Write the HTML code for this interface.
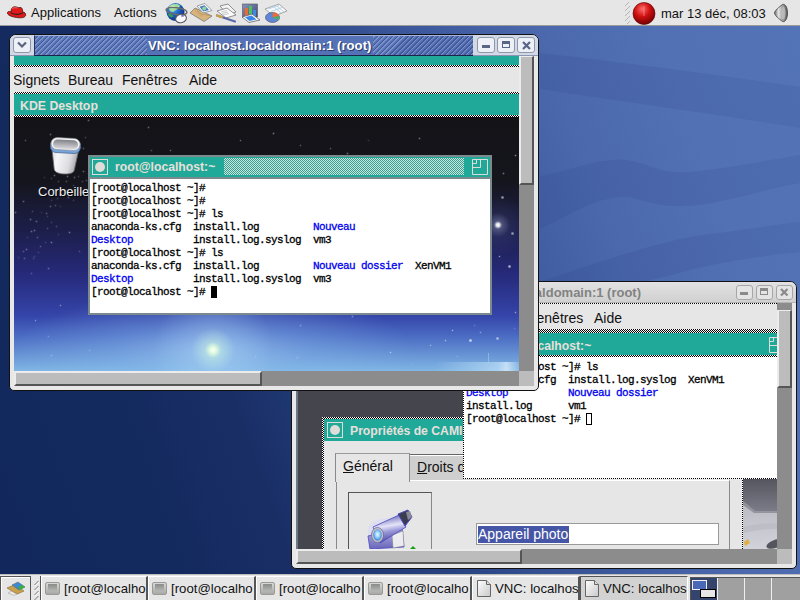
<!DOCTYPE html>
<html><head><meta charset="utf-8">
<style>
*{margin:0;padding:0;box-sizing:border-box}
html,body{width:800px;height:600px;overflow:hidden}
body{position:relative;font-family:"Liberation Sans",sans-serif;background:linear-gradient(70deg,#12285c 0%,#132a5e 18%,#1a2e66 30%,#1e3670 35%,#2e4a8a 50%,#3e5a9e 62%,#4b68ac 73%,#5270b4 85%,#5474b8 100%)}
.a{position:absolute}
.t{position:absolute;white-space:pre;line-height:1}
.chk{background-image:conic-gradient(#000 25%,#fff 0 50%,#000 0 75%,#fff 0);background-size:2px 2px}
.mono{font-family:"Liberation Mono",monospace;font-size:10px;line-height:13px;white-space:pre;position:absolute}
.bl{color:#0000f0}
</style></head><body>



<svg class="a" style="left:0;top:0" width="800" height="600" viewBox="0 0 800 600">
 <path d="M540 53 C600 60 700 72 800 87 L800 128 C700 112 600 98 540 89 Z" fill="rgba(20,40,100,0.085)"/>
 <path d="M540 176 C580 168 600 158 625 160 C650 163 660 175 690 172 C730 168 770 160 800 155 L800 183 C760 190 720 205 684 206 C650 207 640 196 620 197 C590 200 570 215 540 229 Z" fill="rgba(20,40,100,0.085)"/>
 <path d="M540 282 C600 262 660 240 710 234 C750 229 780 224 800 222 L800 252 C760 256 720 262 690 270 C650 282 600 290 560 300 Z" fill="rgba(20,40,100,0.085)"/>
</svg>
<!-- ============ TOP PANEL ============ -->
<div id="top" class="a" style="left:0;top:0;width:800px;height:26px;background:#e6e6e6;border-bottom:1px solid #9a9a9a">
 <!-- red hat -->
 <svg class="a" style="left:6px;top:5px" width="21" height="14" viewBox="0 0 21 14">
  <path d="M1.5 8.5 C1 6.5 3 6 5 7 C5 4 6 1.5 9.5 1.8 C11.5 2 12 3 14 2.5 C16 2.2 16.5 4 16.8 7 C18.5 7.2 20 8.2 19.6 10.5 C19 12.8 15 13.2 10.5 12.5 C6 11.8 2.2 10.5 1.5 8.5Z" fill="#e01a1a" stroke="#3a0808" stroke-width="0.7"/>
  <path d="M5 7.2 C8 9 13 9.5 16.8 7.3 L16.9 8.6 C13 10.6 8 10.2 5 8.5Z" fill="#222"/>
  <path d="M6 3.5 C8 2.5 10 2.6 11.5 3" stroke="#ff7a7a" stroke-width="0.8" fill="none"/>
 </svg>
 <div class="t" style="left:31px;top:6px;font-size:13px;color:#111">Applications</div>
 <div class="t" style="left:114px;top:6px;font-size:13px;color:#111">Actions</div>
 <!-- globe -->
 <svg class="a" style="left:163px;top:1px" width="26" height="24" viewBox="0 0 26 24">
  <defs><radialGradient id="gl" cx="0.35" cy="0.3" r="0.75"><stop offset="0" stop-color="#5aa8f0"/><stop offset="0.55" stop-color="#1a5cc0"/><stop offset="1" stop-color="#0a2a70"/></radialGradient></defs>
  <circle cx="12.5" cy="11" r="9" fill="url(#gl)"/>
  <path d="M6 5.5 C9 2.5 14 2.5 17 4.5 C16 8 13 8.5 11 10.5 C8.5 11.5 5.5 10 6 5.5Z" fill="#a4dca0"/>
  <path d="M8 5 C10 4 12 4.5 12 6 C10 7.5 8.5 7 8 5Z" fill="#d8f4d0"/>
  <path d="M5 13 C7 12.5 9 13.5 10.5 15.5 C8 17 6 16 5 13Z" fill="#38a048"/>
  <ellipse cx="13.5" cy="10" rx="10.5" ry="3.4" transform="rotate(8 13 10)" fill="none" stroke="#6a6a6a" stroke-width="1.4"/>
  <ellipse cx="18" cy="17.5" rx="5.5" ry="4.2" transform="rotate(-15 18 17.5)" fill="#f8f8fa" stroke="#5a5a64" stroke-width="1.1"/>
  <ellipse cx="19.5" cy="14.8" rx="1.6" ry="0.9" fill="#6a6ac0"/>
 </svg>
 <!-- envelope -->
 <svg class="a" style="left:189px;top:2px" width="24" height="20" viewBox="0 0 24 20">
  <path d="M1 11 L6 6 L23 14 L15 19.5 Z" fill="#d8b47c" stroke="#7a7a7a" stroke-width="0.8"/>
  <path d="M6 6 L12 12 L23 14" fill="none" stroke="#b09060" stroke-width="0.7"/>
  <path d="M4 7 L15 12.5 L12 15 Z" fill="#c8a46c" opacity="0.6"/>
  <path d="M8 4 L16 1.5 L23 8.5 L14 11 Z" fill="#fafafa" stroke="#8a8a8a" stroke-width="0.8"/>
  <path d="M10.5 4.8 L15.5 3.3 L20 8 L14.3 9.6 Z" fill="#3f78c8"/>
  <circle cx="15.2" cy="6.4" r="2" fill="#98d49a"/>
 </svg>
 <!-- document + pen -->
 <svg class="a" style="left:215px;top:3px" width="24" height="20" viewBox="0 0 24 20">
  <path d="M5 3 L13 1 L21 9 L13 12 Z" fill="#f4f4f4" stroke="#777" stroke-width="0.8"/>
  <path d="M2 8 L12 5 L21 12 L11 15 Z" fill="#fbfbfb" stroke="#777" stroke-width="0.8"/>
  <path d="M6 9 L12 7.5 M7 10.5 L13 9 M8 12 L14 10.5" stroke="#aaa" stroke-width="0.6"/>
  <path d="M2 12.5 L20 18.5" stroke="#5a6aa8" stroke-width="2.2" stroke-linecap="round"/>
  <path d="M2 12.5 L7 14.2" stroke="#c8a040" stroke-width="2.2" stroke-linecap="round"/>
 </svg>
 <!-- presentation -->
 <svg class="a" style="left:241px;top:3px" width="20" height="20" viewBox="0 0 20 20">
  <defs><linearGradient id="pb" x1="0" y1="0" x2="1" y2="1"><stop offset="0" stop-color="#8a94c0"/><stop offset="1" stop-color="#3a4878"/></linearGradient></defs><rect x="1.5" y="1" width="15" height="13" fill="url(#pb)" stroke="#555" stroke-width="0.6"/>
  <rect x="4" y="5" width="3" height="8" fill="#f06a2a"/>
  <rect x="8" y="3" width="3" height="10" fill="#4cc060"/>
  <rect x="12" y="7" width="3" height="6" fill="#3a8ee8"/>
  <path d="M1 14 L11 11 L19 17 L8 19.5 Z" fill="#f6f6f6" stroke="#666" stroke-width="0.8"/>
  <path d="M4 14.3 L10.5 12.5 L15.5 16.5 L8.5 18 Z" fill="#3a86e8"/>
 </svg>
 <!-- spreadsheet pie -->
 <svg class="a" style="left:264px;top:3px" width="24" height="20" viewBox="0 0 24 20">
  <path d="M1 6 L15 1 L23 8 L10 13 Z" fill="#f8f8f8" stroke="#888" stroke-width="0.7"/>
  <path d="M4 6 L15 2.5 M7 8.5 L18 4.5 M10 4 L17 10 M13 3 L20 9" stroke="#9cc8e8" stroke-width="0.7"/>
  <ellipse cx="8.5" cy="14.5" rx="7" ry="5" fill="#5f86d8" stroke="#445" stroke-width="0.6"/>
  <path d="M8.5 14.5 L9 9.5 C12 9.5 14.5 11 15 13 Z" fill="#f06a3a"/>
  <path d="M8.5 14.5 L15 13 C15.5 15 15 16 14 17 Z" fill="#4cb060"/>
 </svg>
 <!-- handle -->
 <div class="a" style="left:625px;top:2px;width:5px;height:22px;background:repeating-linear-gradient(135deg,transparent 0 2.5px,#b4b4b4 2.5px 3.5px)"></div>
 <!-- red ball -->
 <svg class="a" style="left:632px;top:2px" width="24" height="23" viewBox="0 0 24 23">
  <defs><radialGradient id="rb" cx="0.42" cy="0.3" r="0.75"><stop offset="0" stop-color="#ff6a6a"/><stop offset="0.45" stop-color="#d01010"/><stop offset="1" stop-color="#6a0000"/></radialGradient></defs>
  <circle cx="12" cy="11.5" r="11" fill="url(#rb)" stroke="#500" stroke-width="0.6"/>
  <path d="M12 4 L12 14" stroke="#ff9a9a" stroke-width="1" opacity="0.6"/>
 </svg>
 <div class="t" style="left:661px;top:7px;font-size:13px;color:#111">mar 13 déc, 08:03</div>
 <!-- speaker -->
 <svg class="a" style="left:773px;top:3px" width="16" height="20" viewBox="0 0 16 20">
  <defs><linearGradient id="sp" x1="0" y1="0" x2="1" y2="0"><stop offset="0" stop-color="#6a6a6a"/><stop offset="0.3" stop-color="#e4e4e4"/><stop offset="0.65" stop-color="#9a9a9a"/><stop offset="1" stop-color="#5a5a5a"/></linearGradient></defs>
  <path d="M1.5 10 C1.5 8 6 4 9.5 1.5 C12.5 0.5 14.5 5 14.5 10 C14.5 15 12.5 19.5 9.5 18.5 C6 16 1.5 12 1.5 10Z" fill="url(#sp)" stroke="#4a4a4a" stroke-width="0.9"/>
  <ellipse cx="10.5" cy="10" rx="2" ry="6.5" fill="#c8c8c8" opacity="0.7"/>
 </svg>
</div>

<!-- ============ WINDOW 2 (VNC back) ============ -->
<div id="w2" class="a" style="left:291px;top:281px;width:506px;height:288px;background:#e8e8e8;border:1px solid #111;border-radius:7px 7px 5px 5px;overflow:hidden">
 <div class="a" style="left:0;top:0;width:504px;height:21px;background:linear-gradient(#e2e2e2,#d0d0d0);border-bottom:1px solid #b4b4b4"></div>
 <div class="t" style="left:128px;top:4px;font-weight:bold;font-size:13px;color:#828282">VNC: localhost.localdomain:1 (root)</div>
 <div class="a" style="left:444px;top:3px;width:17px;height:15px;background:#e4e4e4;border:1px solid #a6a6a6;border-radius:3px"></div>
 <div class="a" style="left:448px;top:10px;width:8px;height:3px;background:#8a8a8a"></div>
 <div class="a" style="left:464px;top:3px;width:17px;height:15px;background:#e4e4e4;border:1px solid #a6a6a6;border-radius:3px"></div>
 <div class="a" style="left:468px;top:6px;width:8px;height:7px;border:1px solid #8a8a8a;border-top-width:3px"></div>
 <div class="a" style="left:484px;top:3px;width:17px;height:15px;background:#e4e4e4;border:1px solid #a6a6a6;border-radius:3px"></div>
 <svg class="a" style="left:488px;top:6px" width="9" height="9"><path d="M1 1 L7.5 7.5 M7.5 1 L1 7.5" stroke="#8a8a8a" stroke-width="2.2"/></svg>
 <!-- viewport -->
 <div class="a" style="left:4px;top:21px;width:481px;height:246px;overflow:hidden;background:#45454d">
  <div class="a" style="left:0;top:0;width:481px;height:1px;background-image:linear-gradient(90deg,#000 50%,#fff 50%);background-size:2px 1px"></div>
  <div class="a" style="left:0;top:1px;width:481px;height:25px;background:#e6e6e6"></div>
  <div class="t" style="left:232px;top:8px;font-size:14px;color:#111">Fenêtres</div>
  <div class="t" style="left:298px;top:8px;font-size:14px;color:#111">Aide</div>
  <div class="a chk" style="left:0;top:26px;width:481px;height:4px"></div>
  <div class="a" style="left:0;top:30px;width:481px;height:22px;background:#20a898"></div>
  <div class="t" style="left:195px;top:37px;font-weight:bold;font-size:12.2px;color:#e8e0dc">root@localhost:~</div>
  <svg class="a" style="left:473px;top:34px" width="16" height="16" viewBox="0 0 16 16"><path d="M0.5 0.5 H15.5 V15.5 H0.5 Z M0.5 8.5 H8.5 V0.5 M0.5 4.5 H4.5 V0.5" fill="none" stroke="#e0dcd8" stroke-width="1"/></svg>
  <div class="a chk" style="left:0;top:52px;width:481px;height:2px"></div>
  <!-- left strip -->
  <div class="a" style="left:0;top:54px;width:2px;height:192px;background:#6a7888"></div>
  <!-- dialog -->
  <div class="a chk" style="left:26px;top:114px;width:421px;height:140px"></div>
  <div class="a" style="left:28px;top:116px;width:418px;height:140px;background:#e6e6e6"></div>
  <div class="a" style="left:28px;top:116px;width:418px;height:22px;background:#20a898"></div>
  <div class="a" style="left:31px;top:119px;width:16px;height:16px;border:1px solid #e0dcd8"></div>
  <div class="a" style="left:34px;top:122px;width:10px;height:10px;border-radius:50%;background:#e0dcd8"></div>
  <div class="t" style="left:54px;top:122px;font-weight:bold;font-size:12.2px;color:#e8e0dc">Propriétés de CAMI</div>
  <!-- tabs -->
  <div class="a" style="left:113px;top:151px;width:80px;height:27px;background:#cfcfcf;border-top:1px solid #666;border-bottom:1px solid #666;box-shadow:inset 0 1px 0 #fff"></div>
  <div class="t" style="left:121px;top:157px;font-size:14px;color:#111"><u>D</u>roits d’accès</div>
  <div class="a" style="left:40px;top:177px;width:394px;height:80px;border:1px solid #8a8a8a;border-top-color:#fff;background:#e6e6e6"></div>
  <div class="a" style="left:39px;top:150px;width:75px;height:29px;background:#e6e6e6;border:1px solid #8a8a8a;border-bottom:none;border-top-color:#9a9a9a"></div>
  <div class="t" style="left:47px;top:156px;font-size:14px;color:#111"><u>G</u>énéral</div>
  <div class="a" style="left:52px;top:189px;width:84px;height:70px;border:1px solid #555;border-right-color:#888"></div>
  <!-- camera -->
  <svg class="a" style="left:66px;top:203px" width="55" height="44" viewBox="0 0 55 44">
   <defs>
    <linearGradient id="cmt" x1="0.3" y1="0" x2="0.5" y2="1"><stop offset="0" stop-color="#5a58b0"/><stop offset="0.4" stop-color="#e4e4f8"/><stop offset="0.6" stop-color="#9a98d8"/><stop offset="1" stop-color="#44429a"/></linearGradient>
    <linearGradient id="cmb" x1="0" y1="0" x2="0" y2="1"><stop offset="0" stop-color="#b8b8e8"/><stop offset="1" stop-color="#6866b8"/></linearGradient>
    <radialGradient id="ln" cx="0.5" cy="0.45" r="0.6"><stop offset="0" stop-color="#f0faff"/><stop offset="0.5" stop-color="#8ac8f8"/><stop offset="1" stop-color="#1a68d8"/></radialGradient>
   </defs>
   <path d="M6 26 C5 18 12 14 24 12 L30 11 L8 42 L6 42 Z" fill="#dcdcf4" opacity="0.8"/>
   <path d="M6 30 L40 22 L42 41 L8 43 Z" fill="url(#cmb)" stroke="#4a48c0" stroke-width="0.8"/>
   <path d="M30 29 L41 25 L42 40 L31 42 Z" fill="#ececf0" stroke="#777" stroke-width="0.5"/>
   <path d="M11 21 L37 9 L44 21 L18 37 Z" fill="url(#cmt)" stroke="#4a48c0" stroke-width="0.8"/>
   <path d="M36 8 L46 4 L50 11 L43 20 Z" fill="#3c3c50" stroke="#4a48c0" stroke-width="1"/>
   <path d="M44 6 L48 5 L50 11 L46 14 Z" fill="#888898"/>
   <ellipse cx="15.5" cy="29" rx="6" ry="7.5" fill="#c8c4c0" stroke="#6a68a8" stroke-width="0.8"/>
   <ellipse cx="15.5" cy="29" rx="4.2" ry="5.8" fill="url(#ln)"/>
   <path d="M48 43 L51 40 L54 43 Z" fill="#14a014"/>
  </svg>
  <!-- text field -->
  <div class="a" style="left:180px;top:220px;width:243px;height:22px;background:#fff;border:1px solid #9a9a9a"></div>
  <div class="a" style="left:182px;top:223px;width:91px;height:17px;background:#4656a6"></div>
  <div class="t" style="left:182px;top:224px;font-size:14px;color:#fff">Appareil photo</div>
  <!-- wallpaper -->
  <svg class="a" style="left:447px;top:176px" width="34" height="70" viewBox="0 0 34 70">
   <defs>
    <linearGradient id="wp1" x1="0" y1="0" x2="0" y2="1"><stop offset="0" stop-color="#55555f"/><stop offset="1" stop-color="#7c7c88"/></linearGradient>
    <linearGradient id="wp2" x1="0" y1="0" x2="0" y2="1"><stop offset="0" stop-color="#a8a8b2"/><stop offset="0.6" stop-color="#c4c4cc"/><stop offset="1" stop-color="#d2d2da"/></linearGradient>
   </defs>
   <rect x="0" y="0" width="34" height="70" fill="url(#wp2)"/>
   <path d="M0 0 H34 V32 H12 L0 22 Z" fill="url(#wp1)"/>
   <path d="M0 22 L12 32 H34 V34 H11 L0 26Z" fill="#6a6a74" opacity="0.5"/>
   <path d="M0 48 C8 46 20 44 34 44 V50 C20 50 10 52 0 54Z" fill="#b8b8c0" opacity="0.6"/>
   <path d="M1 63 L5 60 L7 64 L2 67Z" fill="#e0b040"/>
   <ellipse cx="32" cy="65" rx="9" ry="4" transform="rotate(-20 32 65)" fill="#55555e"/>
  </svg>
  <!-- terminal -->
  <div class="a chk" style="left:167px;top:54px;width:320px;height:122px"></div>
  <div class="a" style="left:168px;top:54px;width:320px;height:121px;background:#fff">
   <div class="mono" style="left:2px;top:4px;color:#000;font-size:11px;letter-spacing:-0.6px;-webkit-text-stroke:0.3px">[root@localhost ~]# ls
anaconda-ks.cfg  install.log.syslog  XenVM1
<span class="bl">Desktop</span>          <span class="bl">Nouveau dossier</span>
install.log      vm1
[root@localhost ~]# <span style="outline:1px solid #000;outline-offset:-1px">&nbsp;</span></div>
  </div>
 </div>
 <!-- vertical scrollbar -->
 <div class="a" style="left:485px;top:21px;width:15px;height:246px;background:#8c8c8c"></div>
 <div class="a" style="left:485px;top:28px;width:15px;height:78px;background:#bcbcbc;border-left:2px solid #ececec;border-top:1px solid #ececec;border-right:2px solid #555;border-bottom:2px solid #555"></div>
 <!-- horizontal scrollbar -->
 <div class="a" style="left:4px;top:267px;width:481px;height:15px;background:#8c8c8c"></div>
 <div class="a" style="left:4px;top:267px;width:226px;height:15px;background:#bcbcbc;border-top:2px solid #ececec;border-left:2px solid #ececec;border-right:2px solid #555;border-bottom:2px solid #555"></div>
 <div class="a" style="left:485px;top:267px;width:15px;height:15px;background:#bcbcbc"></div>
</div>

<!-- ============ WINDOW 1 (VNC front) ============ -->
<div id="w1" class="a" style="left:9px;top:34px;width:530px;height:357px;background:#e8e8e8;border:1px solid #111;border-radius:7px 7px 5px 5px;overflow:hidden">
 <!-- title bar -->
 <div class="a" style="left:0;top:0;width:528px;height:21px;background:#d3d8e5;border-bottom:1px solid #8a96b4"></div>
 <div class="a" style="left:3px;top:2px;width:18px;height:16px;background:#eef0f7;border:1px solid #8e96ac;border-radius:3px"></div>
 <svg class="a" style="left:7px;top:6px" width="10" height="8"><path d="M1 1.5 L5 5.5 L9 1.5" stroke="#59627e" stroke-width="2.2" fill="none"/></svg>
 <div class="a" style="left:24px;top:0;width:439px;height:21px;background:repeating-linear-gradient(135deg,#5872b6 0 1.6px,#42589a 1.6px 2.5px,#7a92ca 2.5px 3.54px);border-top:1px solid #a4b4e0;border-bottom:1px solid #1a2448;border-left:1px solid #24325e"></div>
 <div class="a" style="left:137px;top:1px;width:226px;height:19px;background:#5672b6"></div>
 <div class="t" style="left:138px;top:4px;font-weight:bold;font-size:13.15px;color:#fff;text-shadow:1px 1px 0 #2a3a6a">VNC: localhost.localdomain:1 (root)</div>
 <div class="a" style="left:467px;top:2px;width:18px;height:16px;background:#eef0f7;border:1px solid #8e96ac;border-radius:3px"></div>
 <div class="a" style="left:472px;top:10px;width:8px;height:3px;background:#5a6484"></div>
 <div class="a" style="left:487px;top:2px;width:18px;height:16px;background:#eef0f7;border:1px solid #8e96ac;border-radius:3px"></div>
 <div class="a" style="left:492px;top:6px;width:8px;height:7px;border:1px solid #5a6484;border-top-width:3px"></div>
 <div class="a" style="left:507px;top:2px;width:18px;height:16px;background:#eef0f7;border:1px solid #8e96ac;border-radius:3px"></div>
 <svg class="a" style="left:512px;top:6px" width="9" height="9"><path d="M1 1 L8 8 M8 1 L1 8" stroke="#5a6484" stroke-width="2.2"/></svg>
 <!-- vnc viewport -->
 <div class="a" style="left:4px;top:21px;width:505px;height:315px;overflow:hidden;background:#111">
  <div class="a" style="left:0;top:0;width:505px;height:9px;background:#20a898"></div>
  <div class="a chk" style="left:0;top:9px;width:505px;height:2px"></div>
  <div class="a" style="left:0;top:11px;width:505px;height:25px;background:#e6e6e6"></div>
  <div class="t" style="left:-1px;top:17px;font-size:14px;color:#111">Signets</div>
  <div class="t" style="left:54px;top:17px;font-size:14px;color:#111">Bureau</div>
  <div class="t" style="left:108px;top:17px;font-size:14px;color:#111">Fenêtres</div>
  <div class="t" style="left:175px;top:17px;font-size:14px;color:#111">Aide</div>
  <div class="a chk" style="left:0;top:36px;width:505px;height:2px"></div>
  <div class="a" style="left:0;top:38px;width:505px;height:21px;background:#20a898"></div>
  <div class="t" style="left:6px;top:44px;font-weight:bold;font-size:12.3px;color:#e8e0dc">KDE Desktop</div>
  <div class="a chk" style="left:0;top:59px;width:505px;height:2px"></div>
  <div id="kde" class="a" style="left:0;top:61px;width:505px;height:254px;overflow:hidden;background:linear-gradient(180deg,#131317 0%,#15151d 25%,#1c1e48 44%,#262a7a 62%,#3444a8 78%,#4a6ac2 86%,#80b6e4 100%)">
   <div class="a" style="left:0;top:0;width:1px;height:1px;background:transparent;box-shadow:501px 38px 0 0.2px rgba(255,255,255,0.5),488px 80px 0 0.6px rgba(255,255,255,0.6),498px 116px 0 0.6px rgba(255,255,255,0.6),485px 139px 0 0.2px rgba(255,255,255,0.5),495px 149px 0 0.6px rgba(255,255,255,0.7),501px 195px 0 0.2px rgba(255,255,255,0.5),456px 223px 0 0.6px rgba(255,255,255,0.8),438px 213px 0 0.2px rgba(255,255,255,0.5),483px 221px 0 0.6px rgba(255,255,255,0.6),46px 188px 0 0.2px rgba(255,255,255,0.4),21px 203px 0 0.2px rgba(255,255,255,0.4),286px 208px 0 0.2px rgba(255,255,255,0.4),376px 235px 0 0.2px rgba(255,255,255,0.5),416px 228px 0 0.2px rgba(255,255,255,0.4),226px 23px 0 0.2px rgba(255,255,255,0.35),156px 33px 0 0.2px rgba(255,255,255,0.35),286px 28px 0 0.2px rgba(255,255,255,0.3),316px 31px 0 0.2px rgba(255,255,255,0.3),76px 43px 0 0.2px rgba(255,255,255,0.3),11px 23px 0 0.2px rgba(255,255,255,0.3),431px 223px 0 0.2px rgba(255,255,255,0.5),466px 215px 0 0.2px rgba(255,255,255,0.4)"></div>
   <div class="a" style="left:421px;top:245px;width:84px;height:9px;background:linear-gradient(90deg,rgba(170,210,240,0) 0%,rgba(170,210,240,0.5) 40%,rgba(200,230,250,0.6) 75%,rgba(230,245,255,0.7) 85%,rgba(170,210,240,0.3) 100%)"></div>
   <div class="a" style="left:474px;top:236px;width:1px;height:10px;background:rgba(170,200,230,0.6)"></div>
   <div class="a" style="left:0;top:0;width:1px;height:1px;box-shadow:44px 117px 0 0.3px rgba(220,225,255,0.14),46px 77px 0 0.3px rgba(220,225,255,0.26),4px 140px 0 0.3px rgba(220,225,255,0.15),43px 81px 0 0.3px rgba(220,225,255,0.18),74px 56px 0 0.3px rgba(220,225,255,0.23),33px 111px 0 0.3px rgba(220,225,255,0.21),45px 73px 0 0.3px rgba(220,225,255,0.14),17px 156px 0 0.3px rgba(220,225,255,0.24),18px 94px 0 0.3px rgba(220,225,255,0.20),66px 30px 0 0.3px rgba(220,225,255,0.28),64px 59px 0 0.3px rgba(220,225,255,0.20),60px 60px 0 0.3px rgba(220,225,255,0.31),40px 58px 0 0.3px rgba(220,225,255,0.36),61px 24px 0 0.3px rgba(220,225,255,0.14),36px 17px 0 0.3px rgba(220,225,255,0.35),13px 120px 0 0.3px rgba(220,225,255,0.13),46px 89px 0 0.3px rgba(220,225,255,0.14),41px 88px 0 0.3px rgba(220,225,255,0.25),69px 54px 0 0.3px rgba(220,225,255,0.36),17px 114px 0 0.3px rgba(220,225,255,0.37),26px 129px 0 0.3px rgba(220,225,255,0.28),42px 109px 0 0.3px rgba(220,225,255,0.22),72px 63px 0 0.3px rgba(220,225,255,0.26),53px 59px 0 0.3px rgba(220,225,255,0.37),32px 96px 0 0.3px rgba(220,225,255,0.30),20px 139px 0 0.3px rgba(220,225,255,0.17),33px 99px 0 0.3px rgba(220,225,255,0.16),12px 132px 0 0.3px rgba(220,225,255,0.36),61px 72px 0 0.3px rgba(220,225,255,0.22),55px 115px 0 0.3px rgba(220,225,255,0.40),37px 83px 0 0.3px rgba(220,225,255,0.15),31px 125px 0 0.3px rgba(220,225,255,0.17),24px 135px 0 0.3px rgba(220,225,255,0.16),66px 75px 0 0.3px rgba(220,225,255,0.39),71px 20px 0 0.3px rgba(220,225,255,0.22),22px 104px 0 0.3px rgba(220,225,255,0.34),37px 125px 0 0.3px rgba(220,225,255,0.40),68px 64px 0 0.3px rgba(220,225,255,0.22),19px 141px 0 0.3px rgba(220,225,255,0.19),37px 105px 0 0.3px rgba(220,225,255,0.18),1px 95px 0 0.3px rgba(220,225,255,0.36),30px 60px 0 0.3px rgba(220,225,255,0.14),57px 47px 0 0.3px rgba(220,225,255,0.34),44px 64px 0 0.3px rgba(220,225,255,0.23),59px 83px 0 0.3px rgba(220,225,255,0.17),34px 151px 0 0.3px rgba(220,225,255,0.35),36px 89px 0 0.3px rgba(220,225,255,0.30),27px 95px 0 0.3px rgba(220,225,255,0.12),74px 3px 0 0.3px rgba(220,225,255,0.38),59px 68px 0 0.3px rgba(220,225,255,0.18),23px 120px 0 0.3px rgba(220,225,255,0.28),20px 113px 0 0.3px rgba(220,225,255,0.37),16px 102px 0 0.3px rgba(220,225,255,0.37),54px 80px 0 0.3px rgba(220,225,255,0.27),63px 77px 0 0.3px rgba(220,225,255,0.17),9px 134px 0 0.3px rgba(220,225,255,0.25),52px 44px 0 0.3px rgba(220,225,255,0.27),52px 64px 0 0.3px rgba(220,225,255,0.28),241px 239px 0 0.3px rgba(220,225,255,0.36),443px 239px 0 0.3px rgba(220,225,255,0.23),283px 240px 0 0.3px rgba(220,225,255,0.40),69px 31px 0 0.3px rgba(220,225,255,0.28),37px 61px 0 0.3px rgba(220,225,255,0.17),338px 199px 0 0.3px rgba(220,225,255,0.42),333px 36px 0 0.3px rgba(220,225,255,0.41),489px 56px 0 0.3px rgba(220,225,255,0.44),500px 211px 0 0.3px rgba(220,225,255,0.20),10px 141px 0 0.3px rgba(220,225,255,0.28),9px 84px 0 0.3px rgba(220,225,255,0.34),259px 16px 0 0.3px rgba(220,225,255,0.45),398px 247px 0 0.3px rgba(220,225,255,0.18),134px 10px 0 0.3px rgba(220,225,255,0.38),137px 33px 0 0.3px rgba(220,225,255,0.28),460px 208px 0 0.3px rgba(220,225,255,0.23),75px 233px 0 0.3px rgba(220,225,255,0.32),354px 23px 0 0.3px rgba(220,225,255,0.17),37px 238px 0 0.3px rgba(220,225,255,0.34),405px 21px 0 0.3px rgba(220,225,255,0.41),34px 219px 0 0.3px rgba(220,225,255,0.29),65px 134px 0 0.3px rgba(220,225,255,0.22),55px 41px 0 0.3px rgba(220,225,255,0.17)"></div>
   <!-- trash -->
   <svg class="a" style="left:34px;top:19px" width="34" height="39" viewBox="0 0 34 39">
    <defs><linearGradient id="tr" x1="0" y1="0" x2="1" y2="0.2"><stop offset="0" stop-color="#d0d0d4"/><stop offset="0.3" stop-color="#f6f6f8"/><stop offset="0.75" stop-color="#dcdce0"/><stop offset="1" stop-color="#a8a8b0"/></linearGradient>
    <linearGradient id="tri" x1="0" y1="0" x2="0" y2="1"><stop offset="0" stop-color="#808088"/><stop offset="1" stop-color="#d8d8dc"/></linearGradient></defs>
    <g transform="rotate(3 17 19)">
    <path d="M3 10 L7 34 C8 37 12 38 17 38 C22 38 26 37 27 34 L31 10 Z" fill="url(#tr)" stroke="#666" stroke-width="0.8"/>
    <rect x="2" y="3" width="30" height="14" rx="6" ry="6" fill="#78a4dc" stroke="#4a6a98" stroke-width="0.8"/>
    <rect x="2.5" y="2" width="29" height="12" rx="6" ry="6" fill="#f4f4f6" stroke="#888" stroke-width="0.6"/>
    <rect x="4.5" y="3.8" width="25" height="9" rx="4.5" ry="4.5" fill="url(#tri)"/>
    </g>
   </svg>
   <div class="t" style="left:24px;top:68px;font-size:13px;color:#f0f0f0;text-shadow:1px 1px 1px #000">Corbeille</div>
   <!-- glow -->
   <div class="a" style="left:-1px;top:173px;width:400px;height:120px;background:radial-gradient(ellipse 200px 60px at 200px 60px,rgba(170,215,250,0.55) 0,rgba(140,190,240,0.3) 50%,rgba(140,190,240,0) 100%)"></div>
   <div class="a" style="left:139px;top:173px;width:120px;height:120px;background:radial-gradient(circle at 60px 60px,rgba(255,255,255,1) 0,rgba(230,255,220,0.95) 3px,rgba(200,240,230,0.6) 8px,rgba(170,210,245,0.3) 22px,rgba(150,190,240,0) 60px)"></div>
   <div class="a" style="left:454px;top:78px;width:60px;height:60px;border-radius:50%;background:radial-gradient(circle,rgba(255,255,255,1) 0,rgba(255,255,255,0.9) 1.5px,rgba(200,210,255,0.3) 4px,rgba(150,170,255,0.08) 12px,rgba(150,170,255,0) 30px)"></div>
   <!-- terminal -->
   <div class="a" style="left:74px;top:38px;width:404px;height:160px;background:#7b8a8c">
    <div class="a" style="left:2px;top:2px;width:400px;height:20px;background:#20a898"></div>
    <div class="a" style="left:4px;top:4px;width:16px;height:16px;border:1px solid #e0dcd8"></div>
    <div class="a" style="left:7px;top:7px;width:10px;height:10px;border-radius:50%;background:#e0dcd8"></div>
    <div class="t" style="left:27px;top:6px;font-weight:bold;font-size:12.2px;color:#e8e0dc">root@localhost:~</div>
    <div class="a" style="left:136px;top:3px;width:240px;height:17px;background-image:conic-gradient(#e0dcd8 25%,#20a898 0 50%,#e0dcd8 0 75%,#20a898 0);background-size:2px 2px"></div>
    <svg class="a" style="left:384px;top:4px" width="16" height="16" viewBox="0 0 16 16"><path d="M0.5 0.5 H15.5 V15.5 H0.5 Z M0.5 8.5 H8.5 V0.5 M0.5 4.5 H4.5 V0.5" fill="none" stroke="#e0dcd8" stroke-width="1"/></svg>
    <div class="a" style="left:2px;top:24px;width:400px;height:134px;background:#fff">
     <div class="mono" style="left:1px;top:3px;color:#000;font-size:11px;letter-spacing:-0.6px;-webkit-text-stroke:0.3px">[root@localhost ~]#
[root@localhost ~]#
[root@localhost ~]# ls
anaconda-ks.cfg  install.log         <span class="bl">Nouveau</span>
<span class="bl">Desktop</span>          install.log.syslog  vm3
[root@localhost ~]# ls
anaconda-ks.cfg  install.log         <span class="bl">Nouveau dossier</span>  XenVM1
<span class="bl">Desktop</span>          install.log.syslog  vm3
[root@localhost ~]# <span style="background:#000">&nbsp;</span></div>
    </div>
   </div>
  </div>
 </div>
 <!-- vertical scrollbar -->
 <div class="a" style="left:509px;top:21px;width:15px;height:315px;background:#8c8c8c"></div>
 <div class="a" style="left:509px;top:21px;width:15px;height:129px;background:#bcbcbc;border-left:2px solid #ececec;border-top:1px solid #ececec;border-right:2px solid #555;border-bottom:2px solid #555"></div>
 <!-- horizontal scrollbar -->
 <div class="a" style="left:4px;top:336px;width:505px;height:15px;background:#8c8c8c"></div>
 <div class="a" style="left:4px;top:336px;width:248px;height:15px;background:#bcbcbc;border-top:2px solid #ececec;border-left:2px solid #ececec;border-right:2px solid #555;border-bottom:2px solid #555"></div>
 <div class="a" style="left:509px;top:336px;width:15px;height:15px;background:#bcbcbc"></div>
</div>

<!-- ============ BOTTOM PANEL ============ -->
<div id="bot" class="a" style="left:0;top:574px;width:800px;height:26px;background:#e6e6e6;border-top:1px solid #bdbdbd">
 <div class="a" style="left:0;top:1px;width:31px;height:25px;border:1px solid #555;border-top-color:#555;background:#e6e6e6;box-shadow:inset 1px 1px 0 #fff"></div>
 <svg class="a" style="left:6px;top:6px" width="20" height="15" viewBox="0 0 20 15">
  <path d="M2 12 L9 8 L15 11 L8 14.5 Z" fill="#e8e8e8" stroke="#aaa" stroke-width="0.6"/>
  <path d="M1 7 L8 4 L18 10 L11 13 Z" fill="#c8a050" stroke="#8a6a30" stroke-width="0.6"/>
  <path d="M6 4 L12 1 L19 6 L13 9 Z" fill="#3a8ad8" stroke="#666" stroke-width="0.6"/>
  <path d="M12 6 L16 4 L19 6 L14 9 Z" fill="#3ab040"/>
 </svg>
 <svg class="a" style="left:33px;top:3px" width="7" height="22"><path d="M1.5 7 L5.5 3 M1.5 12 L5.5 8 M1.5 17 L5.5 13 M1.5 22 L5.5 18" stroke="#777" stroke-width="1"/><path d="M2 8 L6 4 M2 13 L6 9 M2 18 L6 14" stroke="#fff" stroke-width="0.8"/></svg>
 <div class="a" style="left:40px;top:1px;width:1px;height:25px;background:#555"></div>
 <div class="a" style="left:41px;top:1px;width:107px;height:25px;background:#e6e6e6;border-top:1px solid #fff;border-left:1px solid #fff;border-right:2px solid #555;border-bottom:1px solid #555;overflow:hidden"><div class="a" style="left:3px;top:5px;width:15px;height:13px;border-radius:2px;background:linear-gradient(#d8d8d4,#a8a8a4);border:1px solid #9a9a96"></div><div class="a" style="left:6px;top:7px;width:9px;height:7px;background:linear-gradient(#8a8c8a,#b4b6b4)"></div><div class="t" style="left:22px;top:5px;font-size:13.2px;color:#111">[root@localho</div></div><div class="a" style="left:148px;top:1px;width:108px;height:25px;background:#e6e6e6;border-top:1px solid #fff;border-left:1px solid #fff;border-right:2px solid #555;border-bottom:1px solid #555;overflow:hidden"><div class="a" style="left:3px;top:5px;width:15px;height:13px;border-radius:2px;background:linear-gradient(#d8d8d4,#a8a8a4);border:1px solid #9a9a96"></div><div class="a" style="left:6px;top:7px;width:9px;height:7px;background:linear-gradient(#8a8c8a,#b4b6b4)"></div><div class="t" style="left:22px;top:5px;font-size:13.2px;color:#111">[root@localho</div></div><div class="a" style="left:256px;top:1px;width:108px;height:25px;background:#e6e6e6;border-top:1px solid #fff;border-left:1px solid #fff;border-right:2px solid #555;border-bottom:1px solid #555;overflow:hidden"><div class="a" style="left:3px;top:5px;width:15px;height:13px;border-radius:2px;background:linear-gradient(#d8d8d4,#a8a8a4);border:1px solid #9a9a96"></div><div class="a" style="left:6px;top:7px;width:9px;height:7px;background:linear-gradient(#8a8c8a,#b4b6b4)"></div><div class="t" style="left:22px;top:5px;font-size:13.2px;color:#111">[root@localho</div></div><div class="a" style="left:364px;top:1px;width:108px;height:25px;background:#e6e6e6;border-top:1px solid #fff;border-left:1px solid #fff;border-right:2px solid #555;border-bottom:1px solid #555;overflow:hidden"><div class="a" style="left:3px;top:5px;width:15px;height:13px;border-radius:2px;background:linear-gradient(#d8d8d4,#a8a8a4);border:1px solid #9a9a96"></div><div class="a" style="left:6px;top:7px;width:9px;height:7px;background:linear-gradient(#8a8c8a,#b4b6b4)"></div><div class="t" style="left:22px;top:5px;font-size:13.2px;color:#111">[root@localho</div></div><div class="a" style="left:472px;top:1px;width:108px;height:25px;background:#e6e6e6;border-top:1px solid #fff;border-left:1px solid #fff;border-right:2px solid #555;border-bottom:1px solid #555;overflow:hidden"><svg class="a" style="left:4px;top:3px" width="14" height="17" viewBox="0 0 14 17"><defs><linearGradient id="dg4" x1="0" y1="0" x2="1" y2="1"><stop offset="0" stop-color="#fff"/><stop offset="1" stop-color="#c8c8c8"/></linearGradient></defs><path d="M0.5 0.5 H9.5 L13.5 4.5 V16.5 H0.5 Z" fill="url(#dg4)" stroke="#666" stroke-width="1"/><path d="M9.5 0.5 V4.5 H13.5" fill="#ddd" stroke="#666" stroke-width="1"/></svg><div class="t" style="left:22px;top:5px;font-size:13.2px;color:#111">VNC: localhos</div></div><div class="a" style="left:580px;top:1px;width:108px;height:25px;background:#d2d2d2;border-top:1px solid #555;border-left:1px solid #555;border-right:1px solid #fff;border-bottom:1px solid #fff;overflow:hidden"><svg class="a" style="left:4px;top:3px" width="14" height="17" viewBox="0 0 14 17"><defs><linearGradient id="dg5" x1="0" y1="0" x2="1" y2="1"><stop offset="0" stop-color="#fff"/><stop offset="1" stop-color="#c8c8c8"/></linearGradient></defs><path d="M0.5 0.5 H9.5 L13.5 4.5 V16.5 H0.5 Z" fill="url(#dg5)" stroke="#666" stroke-width="1"/><path d="M9.5 0.5 V4.5 H13.5" fill="#ddd" stroke="#666" stroke-width="1"/></svg><div class="t" style="left:22px;top:5px;font-size:13.2px;color:#111">VNC: localhos</div></div>
 <!-- workspace switcher -->
 <div class="a" style="left:690px;top:2px;width:110px;height:23px;background:#a0a0a0;border-top:1px solid #555;border-left:1px solid #555"></div>
 <div class="a" style="left:691px;top:3px;width:26px;height:22px;background:#34446c"></div>
 <div class="a" style="left:692px;top:5px;width:15px;height:10px;background:#4a68b8;border:1px solid #f0f0f0"></div>
 <div class="a" style="left:700px;top:14px;width:16px;height:9px;background:#e6e6e6;border:1.5px solid #000"></div>
 <div class="a" style="left:744px;top:3px;width:1px;height:22px;background:#f0f0f0"></div>
 <div class="a" style="left:771px;top:3px;width:1px;height:22px;background:#f0f0f0"></div>
 <div class="a" style="left:717px;top:3px;width:1px;height:22px;background:#f0f0f0"></div>
</div>

</body></html>
